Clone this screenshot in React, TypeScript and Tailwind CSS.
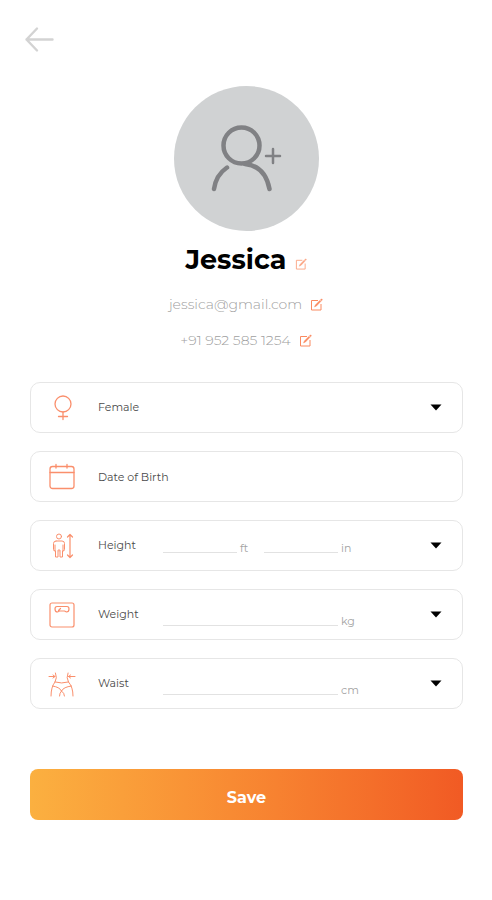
import { useState } from "react";
import type { ReactNode } from "react";

const stroke = {
  fill: "none",
  stroke: "currentColor",
  strokeLinecap: "round" as const,
  strokeLinejoin: "round" as const,
};

function EditIcon({ className }: { className: string }) {
  return (
    <svg viewBox="0 0 13 13" className={className} fill="none" stroke="currentColor" strokeWidth={1} aria-hidden="true">
      <path d="M8 2.500H1.500V12H11V6" />
      <path d="M4.500 9L5.300 7L10 2.300L11 3.300L6.500 8Z" fill="currentColor" strokeWidth={0.4} />
      <path d="M10.500 1.800L11.500 0.800L12.500 1.800L11.500 2.800Z" fill="currentColor" strokeWidth={0.4} />
    </svg>
  );
}

function FemaleIcon() {
  return (
    <svg width="28" height="28" viewBox="0 0 28 28" {...stroke} strokeWidth={1.3} aria-hidden="true">
      <circle cx="15" cy="10" r="8" />
      <path d="M15 18V25.500M10.500 22.500H19.500" />
    </svg>
  );
}

function CalendarIcon() {
  return (
    <svg width="28" height="28" viewBox="0 0 28 28" {...stroke} strokeWidth={1.3} aria-hidden="true">
      <rect x="2" y="3.500" width="24" height="22" rx="2.500" />
      <path d="M2 9.500H26M8 1.500V5M19 1.500V5" />
    </svg>
  );
}

function HeightIcon() {
  return (
    <svg width="28" height="28" viewBox="0 0 28 28" {...stroke} strokeWidth={1} aria-hidden="true">
      <circle cx="11" cy="4.500" r="2.500" />
      <path d="M8 9H14Q16.500 9 16.500 11.500V17.500Q16.500 19 15 19V13M8 9Q5.500 9 5.500 11.500V17.500Q5.500 19 7 19V13" />
      <path d="M7.500 19V25H10V18.500M12 18.500V25H14.500V19M11 17.500V19" />
      <path d="M22 2.500V25.500M19.500 5L22 2.500L24.500 5M19.500 23L22 25.500L24.500 23" strokeWidth={1.2} />
    </svg>
  );
}

function ScaleIcon() {
  return (
    <svg width="28" height="28" viewBox="0 0 28 28" {...stroke} strokeWidth={1.2} aria-hidden="true">
      <rect x="2" y="2" width="24" height="24" rx="2" />
      <path d="M9 5.500H19Q21 5.500 21 8Q21 11 18.500 11L16.500 10H11.500L9.500 11Q7 11 7 8Q7 5.500 9 5.500ZM10.500 9.500L12.500 7.500" />
    </svg>
  );
}

function WaistIcon() {
  return (
    <svg width="28" height="28" viewBox="0 0 28 28" {...stroke} strokeWidth={1} aria-hidden="true">
      <path d="M1 6.500H7M5 5L7 6.500L5 8M27 6.500H20.500M22.500 5L20.500 6.500L22.500 8" />
      <path d="M7.500 3Q9.500 8 7 12Q3 17 3 26M20 3Q18 8 20.500 12Q25 17 25 26" />
      <path d="M7 12Q13.500 14 20.500 12M4.500 16Q11.500 17 13.500 21Q15.500 17 23.500 16M13.500 21Q11.500 23 11.500 26M13.500 21Q16.500 23 16.500 26" />
    </svg>
  );
}

function Caret({ className = "" }: { className?: string }) {
  return (
    <svg width="12" height="7" viewBox="0 0 12 7" className={className} aria-hidden="true">
      <path d="M0.500 0.500H11.500L6 6.500Z" fill="#000" />
    </svg>
  );
}

function Card({ icon, children }: { icon: ReactNode; children: ReactNode }) {
  return (
    <div className="flex h-[51px] items-center rounded-[10px] border border-[#e6e6e6] bg-white">
      <span className="flex w-[62px] shrink-0 justify-center text-[#fa8f6c]">{icon}</span>
      {children}
    </div>
  );
}

type Unit = { name: string; unit: string };

function MeasureRow({ icon, label, units, low = false }: { icon: ReactNode; label: string; units: Unit[]; low?: boolean }) {
  return (
    <Card icon={icon}>
      <span className="ml-[5px] w-[65px] shrink-0">{label}</span>
      <div className={`flex min-w-0 flex-1 ${low ? "pt-3" : "pt-1"}`}>
        {units.map(({ name, unit }) => (
          <label key={name} className="flex min-w-0 flex-1 items-start gap-[3px] text-[#a3a3a3]">
            <input
              type="text"
              inputMode="decimal"
              aria-label={name}
              className="h-[13px] w-0 min-w-0 flex-1 border-b border-[#e2e2e2] bg-transparent outline-none"
            />
            <span className="w-6 leading-4">{unit}</span>
          </label>
        ))}
      </div>
      <button type="button" aria-label={`${label} unit options`} className="ml-[65px] mr-5 flex h-8 items-center">
        <Caret />
      </button>
    </Card>
  );
}

export default function App() {
  const [gender, setGender] = useState("Female");
  return (
    <main className="min-h-screen bg-white font-['Montserrat',Inter,sans-serif] text-[11px] text-[#4a4a4a]">
      <header className="px-6 pt-6">
        <button type="button" aria-label="Back" className="block text-[#d3d3d3]">
          <svg width="32" height="32" viewBox="0 0 32 32" {...stroke} strokeWidth={2.4} aria-hidden="true">
            <path d="M28.500 15.500H2.500M13 4.500L2.500 15.500L13 26.500" />
          </svg>
        </button>
      </header>

      <section className="flex flex-col items-center pt-[30px]">
        <button type="button" aria-label="Add photo" className="size-[145px] rounded-full bg-[#d0d2d3] text-[#808184]">
          <svg viewBox="0 0 145 145" {...stroke} aria-hidden="true">
            <circle cx="67.500" cy="59.500" r="18" strokeWidth={4.500} />
            <path d="M40 103Q42 89 53 81.500M71 78Q91 80 95.500 103" strokeWidth={4.500} />
            <path d="M92 70H106M99 63V77" strokeWidth={2.500} />
          </svg>
        </button>
        <div className="mt-[13px] flex h-8 items-center gap-2">
          <h1 className="text-[27px] font-bold leading-8 text-black">Jessica</h1>
          <button type="button" aria-label="Edit name" className="mt-2 text-[#fba583]">
            <EditIcon className="size-3" />
          </button>
        </div>
        <div className="mt-[18px] flex h-5 items-center gap-2 text-sm font-light text-[#a0a0a0]">
          <p>jessica@gmail.com</p>
          <button type="button" aria-label="Edit email" className="text-[#fa8a60]">
            <EditIcon className="size-[13px]" />
          </button>
        </div>
        <div className="mt-4 flex h-5 items-center gap-2 text-sm font-light text-[#a0a0a0]">
          <p>+91 952 585 1254</p>
          <button type="button" aria-label="Edit phone" className="text-[#fa8a60]">
            <EditIcon className="size-[13px]" />
          </button>
        </div>
      </section>

      <form className="pl-[30px] pr-[29px] pt-8" onSubmit={(e) => e.preventDefault()}>
        <div className="flex flex-col gap-[18px]">
          <Card icon={<FemaleIcon />}>
            <select
              aria-label="Gender"
              value={gender}
              onChange={(e) => setGender(e.target.value)}
              className="ml-[5px] h-full min-w-0 flex-1 appearance-none bg-transparent outline-none"
            >
              <option>Female</option>
              <option>Male</option>
            </select>
            <Caret className="pointer-events-none mr-5" />
          </Card>
          <Card icon={<CalendarIcon />}>
            <input
              type="text"
              aria-label="Date of Birth"
              placeholder="Date of Birth"
              className="ml-[5px] mr-5 h-full min-w-0 flex-1 bg-transparent outline-none placeholder:text-[#4a4a4a]"
            />
          </Card>
          <MeasureRow
            icon={<HeightIcon />}
            label="Height"
            units={[
              { name: "Height in feet", unit: "ft" },
              { name: "Height in inches", unit: "in" },
            ]}
          />
          <MeasureRow icon={<ScaleIcon />} label="Weight" low units={[{ name: "Weight in kilograms", unit: "kg" }]} />
          <MeasureRow icon={<WaistIcon />} label="Waist" low units={[{ name: "Waist in centimetres", unit: "cm" }]} />
        </div>
        <button
          type="submit"
          className="mt-[60px] h-[51px] w-full rounded-lg bg-linear-to-r from-[#fbb040] to-[#f15a24] pt-1.5 text-base font-bold text-white"
        >
          Save
        </button>
      </form>
    </main>
  );
}
